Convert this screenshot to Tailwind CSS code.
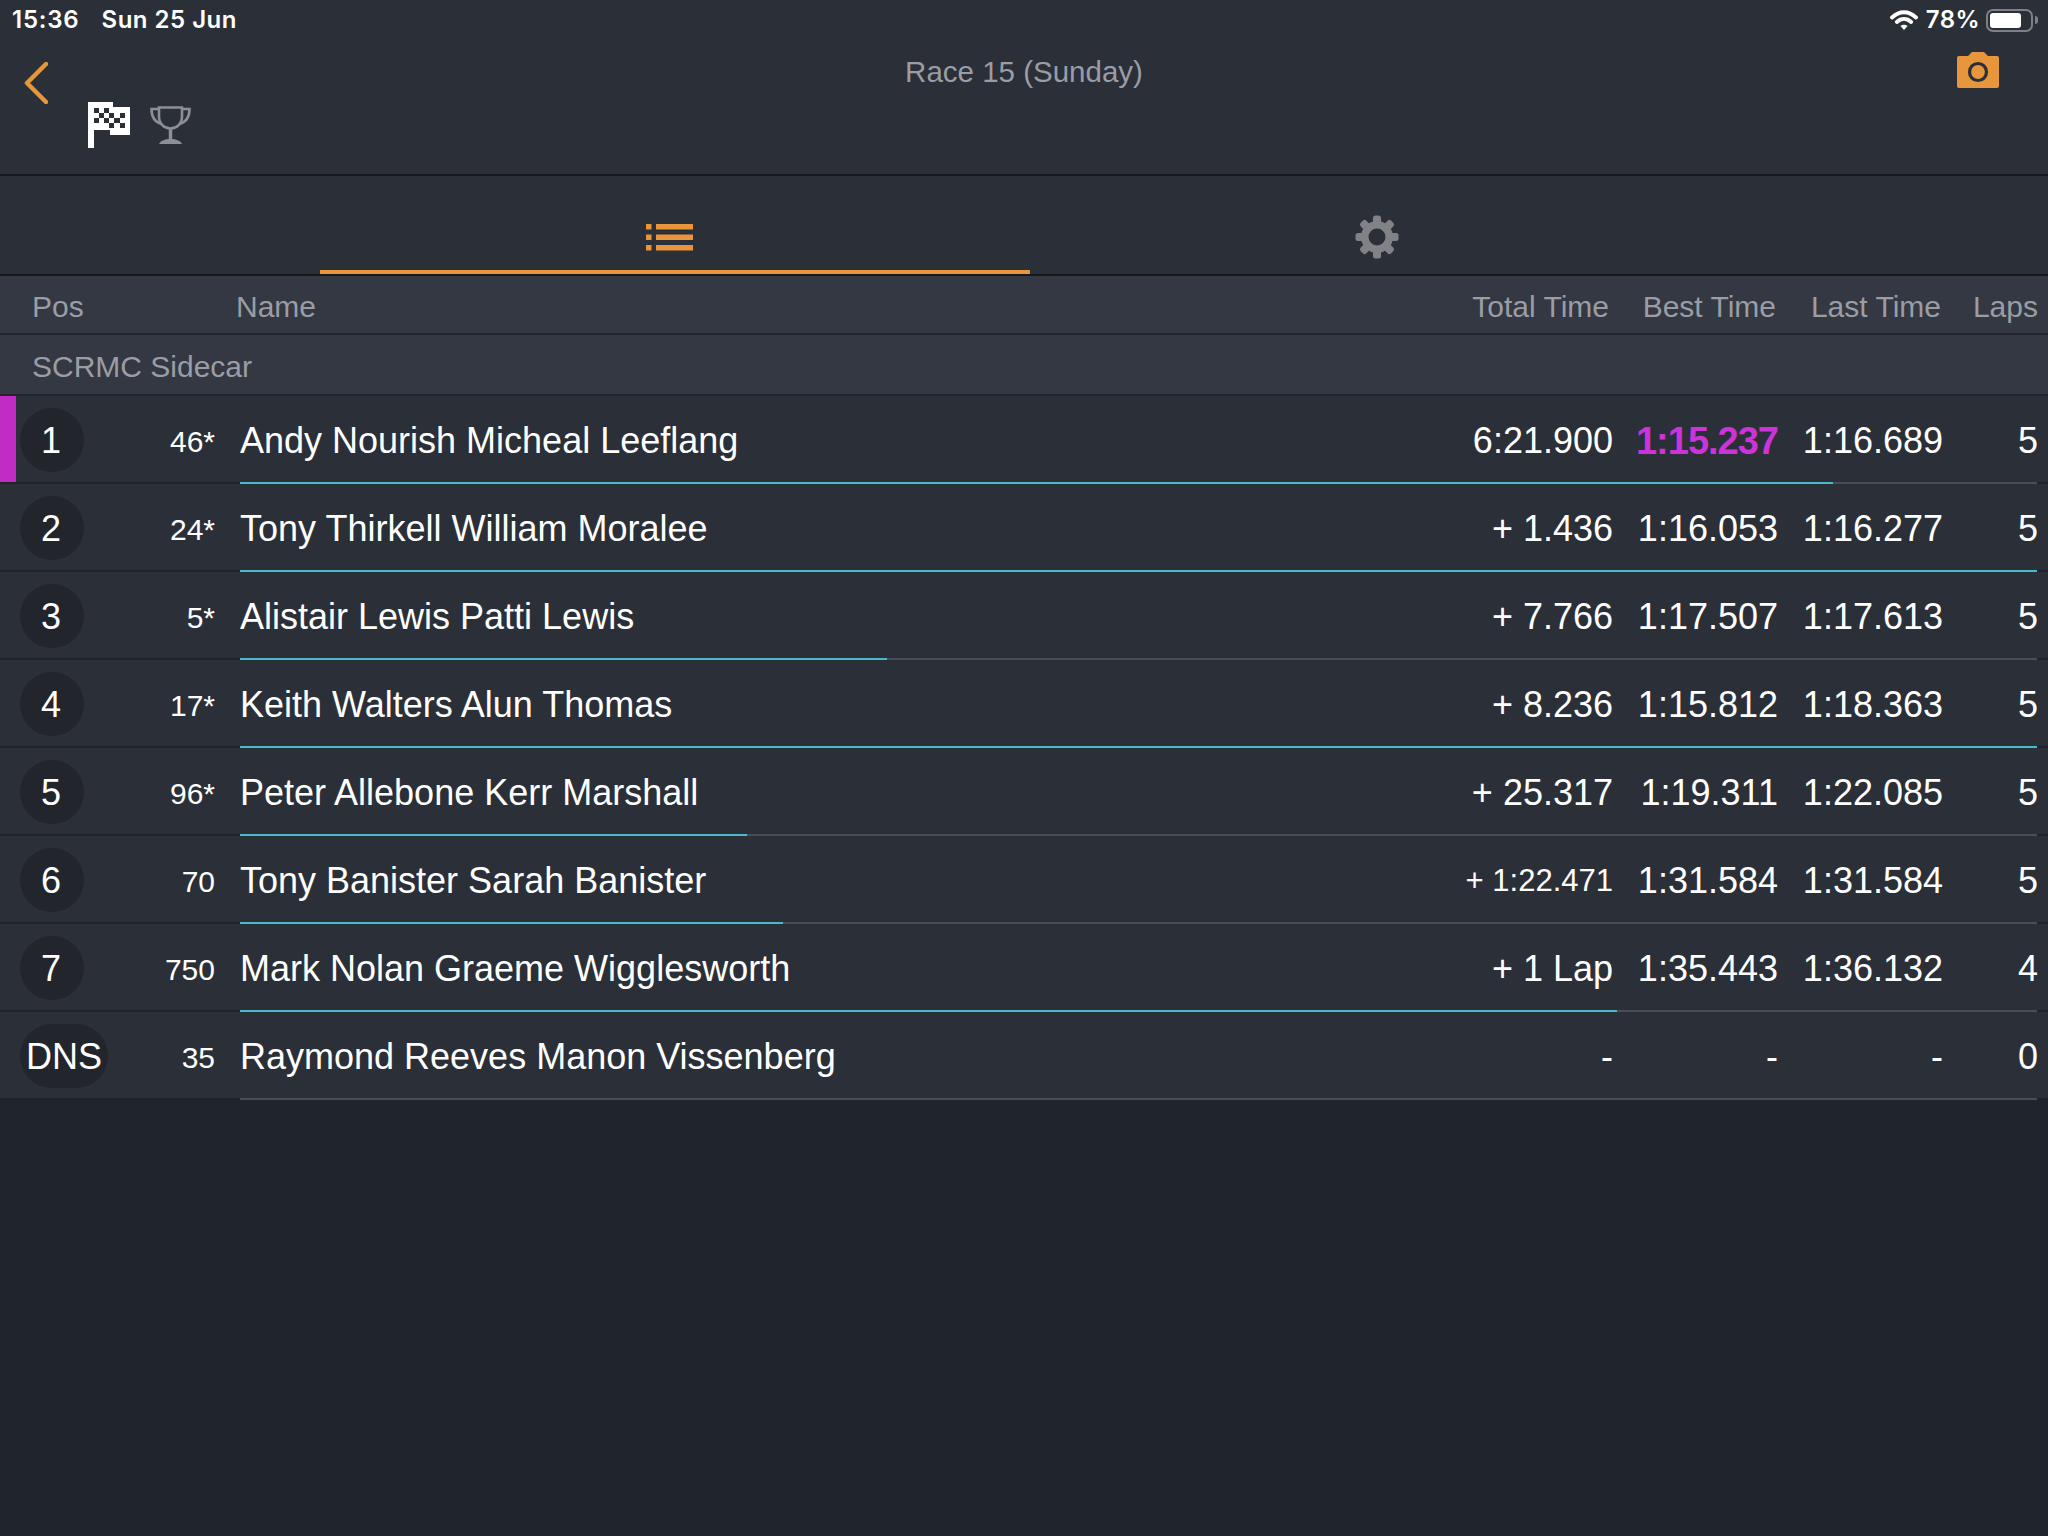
<!DOCTYPE html>
<html lang="en">
<head>
    <meta charset="UTF-8">
    <title>Race 15 (Sunday)</title>
    <script src="https://cdn.jsdelivr.net/npm/@tailwindcss/browser@4"></script>
</head>
<body class="bg-[#20242c] font-['Liberation_Sans',sans-serif]">
<div class="w-[2048px] h-[1536px] overflow-hidden flex flex-col">

    <!-- top bar -->
    <div class="h-[174px] bg-[#2b2f38] shrink-0">
        <div class="h-[40px] flex items-center pl-3 pr-[10px] font-['Inter',sans-serif] font-semibold text-[24px] text-white tracking-[0.5px]">
            <span class="tracking-[0.8px]">15:36</span>
            <span class="ml-[22px]">Sun 25 Jun</span>
            <svg class="ml-auto" width="28" height="21" viewBox="0 0 28 21" fill="none" stroke="#fff" stroke-width="3.8" stroke-linecap="round">
                <path d="M2 7.5C9.5 .5 18.500 .5 26 7.500"/>
                <path d="M6.800 12C11.200 8 16.800 8 21.200 12"/>
                <path d="M14 20l-3.600-4c2.200-1.600 5-1.600 7.200 0z" fill="#fff" stroke="none"/>
            </svg>
            <span class="ml-[8px] tracking-[0.4px]">78%</span>
            <div class="ml-[6px] w-[47px] h-[23px] rounded-[7px] border-2 border-[#7d8088] p-[2px]">
                <div class="w-[31px] h-full bg-white rounded-[3px]"></div>
            </div>
            <div class="ml-[2px] w-[3px] h-[8px] bg-[#7d8088] rounded-r-full"></div>
        </div>
        <div class="grid grid-cols-[1fr_auto_1fr] h-[134px]">
            <div class="pl-[24px] pt-[22px] flex items-start">
                <svg width="24" height="42" viewBox="0 0 24 42" fill="none" stroke="#e8963c" stroke-width="4.500" stroke-linecap="round" stroke-linejoin="round"><path d="M22 2L3 21l19 19"/></svg>
                <svg class="ml-[40px] mt-[40px]" width="43" height="46" viewBox="0 0 43 46">
                    <path fill="#fff" d="M0 0H25V5H42V33H22V28H6V46H0Z"/>
                    <g fill="#2b2f38">
                        <rect x="6" y="6" width="5" height="5"/><rect x="16" y="6" width="5" height="5"/>
                        <rect x="11" y="11" width="5" height="5"/><rect x="21" y="11" width="5" height="5"/><rect x="32" y="11" width="5" height="5"/>
                        <rect x="6" y="16" width="5" height="5"/><rect x="16" y="16" width="5" height="5"/><rect x="26" y="16" width="6" height="5"/>
                        <rect x="21" y="21" width="5" height="5"/><rect x="32" y="21" width="5" height="5"/>
                    </g>
                </svg>
                <svg class="ml-[19px] mt-[44px]" width="41" height="38" viewBox="0 0 41 38" fill="none" stroke="#8c8f95" stroke-width="2.600">
                    <path d="M9 1.500h23v9c0 7-5 12-11.500 12S9 17.500 9 10.500z"/>
                    <path d="M9 3H1.500c0 8 3 13 10 15M32 3h7.500c0 8-3 13-10 15"/>
                    <path d="M20.500 22v11" stroke-width="3.500"/>
                    <path d="M9 38c1-3 6-5 11.500-5S31 35 32 38z" fill="#8c8f95" stroke="none"/>
                </svg>
            </div>
            <div class="pt-[14px] text-[29.500px] leading-[36px] text-[#9a9da4]">Race 15 (Sunday)</div>
            <div class="flex justify-end pr-[49px] pt-[12px]">
                <svg class="self-start" width="42" height="36" viewBox="0 0 42 36">
                    <path fill="#e8963c" d="M2 4h9l3-3c.5-.6 1-1 2-1h10c1 0 1.500.4 2 1l3 3h9c1.200 0 2 .8 2 2v28c0 1.200-.8 2-2 2H2c-1.200 0-2-.8-2-2V6c0-1.200.8-2 2-2z"/>
                    <circle cx="21" cy="20" r="8.500" fill="none" stroke="#2b2f38" stroke-width="3.200"/>
                </svg>
            </div>
        </div>
    </div>

    <!-- tabs -->
    <div class="h-[102px] shrink-0 bg-[#2b2f38] border-y-2 border-[#16181d] flex pl-[320px] pr-[324px]">
        <div class="w-[710px] h-full border-b-4 border-[#e8963c] flex items-center justify-center pt-[28px] pr-[12px]">
            <svg width="47" height="27" viewBox="0 0 47 27" fill="#e8963c">
                <rect width="5.500" height="5.500"/><rect x="10" width="37" height="5.500"/>
                <rect y="10.500" width="5.500" height="5.500"/><rect x="10" y="10.500" width="37" height="5.500"/>
                <rect y="21" width="5.500" height="5.500"/><rect x="10" y="21" width="37" height="5.500"/>
            </svg>
        </div>
        <div class="flex-1 flex items-center justify-center pt-[23px]">
            <svg width="44" height="44" viewBox="0 0 44 44" fill="#808286">
                <circle cx="22" cy="22" r="16"/>
                <rect x="18" y="0.500" width="8" height="43" rx="2.500"/>
                <rect x="18" y="0.500" width="8" height="43" rx="2.500" transform="rotate(45 22 22)"/>
                <rect x="18" y="0.500" width="8" height="43" rx="2.500" transform="rotate(90 22 22)"/>
                <rect x="18" y="0.500" width="8" height="43" rx="2.500" transform="rotate(135 22 22)"/>
                <circle cx="22" cy="22" r="8.500" fill="#2b2f38"/>
            </svg>
        </div>
    </div>

    <!-- column heads -->
    <div class="h-[59px] shrink-0 bg-[#343842] border-b-2 border-[#23262d] flex items-center pt-[4px] text-[30px] text-[#9a9da4]">
        <div class="w-[236px] pl-8">Pos</div>
        <div class="flex-1">Name</div>
        <div class="w-[170px] text-right">Total Time</div>
        <div class="w-[167px] text-right">Best Time</div>
        <div class="w-[165px] text-right">Last Time</div>
        <div class="w-[107px] text-right pr-[10px]">Laps</div>
    </div>
    <div class="h-[61px] shrink-0 bg-[#343842] border-b-2 border-[#23262d] flex items-center pt-[4px] pl-8 text-[30px] text-[#9a9da4]">SCRMC Sidecar</div>

    <!-- results -->
    <div class="relative h-[88px] shrink-0 bg-[#2b2f38] flex items-center pt-[2px] text-white text-[36px]">
        <div class="absolute left-0 top-0 bottom-[2px] w-4 bg-[#c02cc4]"></div>
        <div class="absolute left-0 right-0 bottom-0 h-[2px] bg-[#20232a]"></div>
        <div class="absolute left-[240px] right-[11px] bottom-0 h-[2px] bg-[#4a4d55]"><div class="h-full bg-[#4cb8d0]" style="width:1593px"></div></div>
        <div class="ml-5 -mt-[2px] pt-[2px] pr-[2px] w-[64px] h-[64px] rounded-full bg-[#22252c] flex items-center justify-center">1</div>
        <div class="w-[131px] text-right text-[30px]">46*</div>
        <div class="ml-[25px] flex-1">Andy Nourish Micheal Leeflang</div>
        <div class="w-[170px] text-right">6:21.900</div>
        <div class="w-[165px] text-right font-bold text-[38px] text-[#cc33d8] tracking-[-1px]">1:15.237</div>
        <div class="w-[165px] text-right">1:16.689</div>
        <div class="w-[105px] pr-[10px] text-right">5</div>
    </div>
    <div class="relative h-[88px] shrink-0 bg-[#2b2f38] flex items-center pt-[2px] text-white text-[36px]">
        <div class="absolute left-0 right-0 bottom-0 h-[2px] bg-[#20232a]"></div>
        <div class="absolute left-[240px] right-[11px] bottom-0 h-[2px] bg-[#4a4d55]"><div class="h-full bg-[#4cb8d0]" style="width:1797px"></div></div>
        <div class="ml-5 -mt-[2px] pt-[2px] pr-[2px] w-[64px] h-[64px] rounded-full bg-[#22252c] flex items-center justify-center">2</div>
        <div class="w-[131px] text-right text-[30px]">24*</div>
        <div class="ml-[25px] flex-1">Tony Thirkell William Moralee</div>
        <div class="w-[170px] text-right">+ 1.436</div>
        <div class="w-[165px] text-right">1:16.053</div>
        <div class="w-[165px] text-right">1:16.277</div>
        <div class="w-[105px] pr-[10px] text-right">5</div>
    </div>
    <div class="relative h-[88px] shrink-0 bg-[#2b2f38] flex items-center pt-[2px] text-white text-[36px]">
        <div class="absolute left-0 right-0 bottom-0 h-[2px] bg-[#20232a]"></div>
        <div class="absolute left-[240px] right-[11px] bottom-0 h-[2px] bg-[#4a4d55]"><div class="h-full bg-[#4cb8d0]" style="width:647px"></div></div>
        <div class="ml-5 -mt-[2px] pt-[2px] pr-[2px] w-[64px] h-[64px] rounded-full bg-[#22252c] flex items-center justify-center">3</div>
        <div class="w-[131px] text-right text-[30px]">5*</div>
        <div class="ml-[25px] flex-1">Alistair Lewis Patti Lewis</div>
        <div class="w-[170px] text-right">+ 7.766</div>
        <div class="w-[165px] text-right">1:17.507</div>
        <div class="w-[165px] text-right">1:17.613</div>
        <div class="w-[105px] pr-[10px] text-right">5</div>
    </div>
    <div class="relative h-[88px] shrink-0 bg-[#2b2f38] flex items-center pt-[2px] text-white text-[36px]">
        <div class="absolute left-0 right-0 bottom-0 h-[2px] bg-[#20232a]"></div>
        <div class="absolute left-[240px] right-[11px] bottom-0 h-[2px] bg-[#4a4d55]"><div class="h-full bg-[#4cb8d0]" style="width:1797px"></div></div>
        <div class="ml-5 -mt-[2px] pt-[2px] pr-[2px] w-[64px] h-[64px] rounded-full bg-[#22252c] flex items-center justify-center">4</div>
        <div class="w-[131px] text-right text-[30px]">17*</div>
        <div class="ml-[25px] flex-1">Keith Walters Alun Thomas</div>
        <div class="w-[170px] text-right">+ 8.236</div>
        <div class="w-[165px] text-right">1:15.812</div>
        <div class="w-[165px] text-right">1:18.363</div>
        <div class="w-[105px] pr-[10px] text-right">5</div>
    </div>
    <div class="relative h-[88px] shrink-0 bg-[#2b2f38] flex items-center pt-[2px] text-white text-[36px]">
        <div class="absolute left-0 right-0 bottom-0 h-[2px] bg-[#20232a]"></div>
        <div class="absolute left-[240px] right-[11px] bottom-0 h-[2px] bg-[#4a4d55]"><div class="h-full bg-[#4cb8d0]" style="width:507px"></div></div>
        <div class="ml-5 -mt-[2px] pt-[2px] pr-[2px] w-[64px] h-[64px] rounded-full bg-[#22252c] flex items-center justify-center">5</div>
        <div class="w-[131px] text-right text-[30px]">96*</div>
        <div class="ml-[25px] flex-1">Peter Allebone Kerr Marshall</div>
        <div class="w-[170px] text-right">+ 25.317</div>
        <div class="w-[165px] text-right">1:19.311</div>
        <div class="w-[165px] text-right">1:22.085</div>
        <div class="w-[105px] pr-[10px] text-right">5</div>
    </div>
    <div class="relative h-[88px] shrink-0 bg-[#2b2f38] flex items-center pt-[2px] text-white text-[36px]">
        <div class="absolute left-0 right-0 bottom-0 h-[2px] bg-[#20232a]"></div>
        <div class="absolute left-[240px] right-[11px] bottom-0 h-[2px] bg-[#4a4d55]"><div class="h-full bg-[#4cb8d0]" style="width:543px"></div></div>
        <div class="ml-5 -mt-[2px] pt-[2px] pr-[2px] w-[64px] h-[64px] rounded-full bg-[#22252c] flex items-center justify-center">6</div>
        <div class="w-[131px] text-right text-[30px]">70</div>
        <div class="ml-[25px] flex-1">Tony Banister Sarah Banister</div>
        <div class="w-[170px] text-right text-[31px]">+ 1:22.471</div>
        <div class="w-[165px] text-right">1:31.584</div>
        <div class="w-[165px] text-right">1:31.584</div>
        <div class="w-[105px] pr-[10px] text-right">5</div>
    </div>
    <div class="relative h-[88px] shrink-0 bg-[#2b2f38] flex items-center pt-[2px] text-white text-[36px]">
        <div class="absolute left-0 right-0 bottom-0 h-[2px] bg-[#20232a]"></div>
        <div class="absolute left-[240px] right-[11px] bottom-0 h-[2px] bg-[#4a4d55]"><div class="h-full bg-[#4cb8d0]" style="width:1377px"></div></div>
        <div class="ml-5 -mt-[2px] pt-[2px] pr-[2px] w-[64px] h-[64px] rounded-full bg-[#22252c] flex items-center justify-center">7</div>
        <div class="w-[131px] text-right text-[30px]">750</div>
        <div class="ml-[25px] flex-1">Mark Nolan Graeme Wigglesworth</div>
        <div class="w-[170px] text-right">+ 1 Lap</div>
        <div class="w-[165px] text-right">1:35.443</div>
        <div class="w-[165px] text-right">1:36.132</div>
        <div class="w-[105px] pr-[10px] text-right">4</div>
    </div>
    <div class="relative h-[88px] shrink-0 bg-[#2b2f38] flex items-center pt-[2px] text-white text-[36px]">
        <div class="absolute left-0 right-0 bottom-0 h-[2px] bg-[#20232a]"></div>
        <div class="absolute left-[240px] right-[11px] bottom-0 h-[2px] bg-[#4a4d55]"></div>
        <div class="ml-5 -mt-[2px] pt-[2px] w-[88px] h-[64px] rounded-full bg-[#22252c] flex items-center justify-center">DNS</div>
        <div class="w-[107px] text-right text-[30px]">35</div>
        <div class="ml-[25px] flex-1">Raymond Reeves Manon Vissenberg</div>
        <div class="w-[170px] text-right">-</div>
        <div class="w-[165px] text-right">-</div>
        <div class="w-[165px] text-right">-</div>
        <div class="w-[105px] pr-[10px] text-right">0</div>
    </div>
</div>
</body>
</html>
